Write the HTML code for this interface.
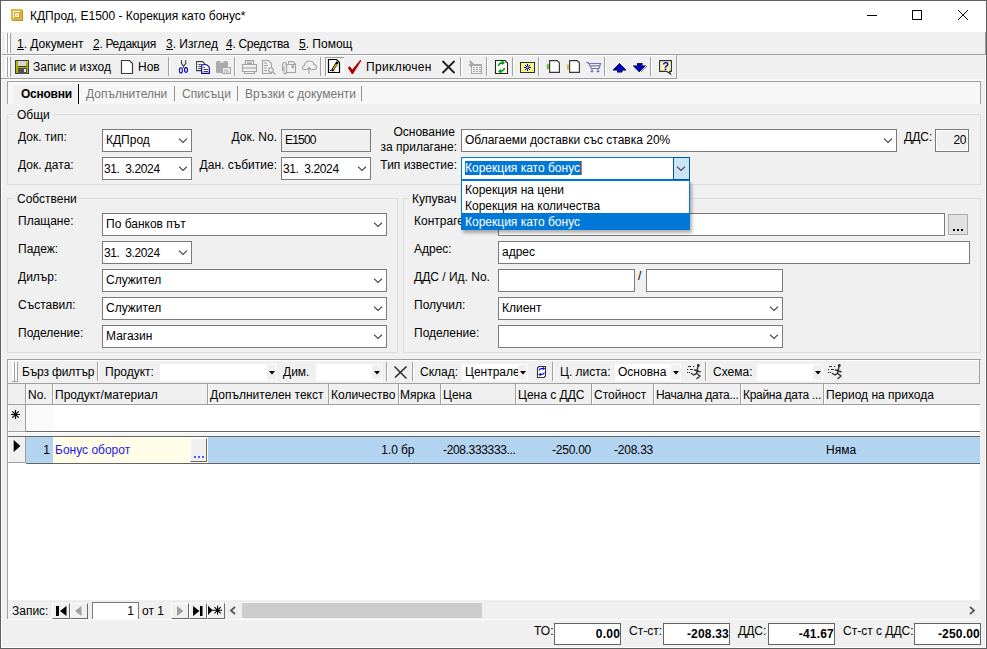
<!DOCTYPE html>
<html><head><meta charset="utf-8">
<style>
*{box-sizing:border-box}
html,body{margin:0;padding:0}
body{width:987px;height:649px;overflow:hidden;position:relative;background:#f0f0f0;font-family:"Liberation Sans",sans-serif;font-size:12px;color:#000}
.a{position:absolute}
.t{position:absolute;white-space:nowrap;line-height:14px}
.box{position:absolute;background:#fff;border:1px solid #7a7a7a}
.grp{position:absolute;border:1px solid #dcdcdc}
.chev{position:absolute;width:9px;height:5px}
.sep{position:absolute;width:1px;background:#a0a0a0;border-right:1px solid #fff}
u{text-decoration:none;position:relative}u::after{content:"";position:absolute;left:0;right:0;top:12px;height:1px;background:#000}
</style></head><body>
<!-- window border -->
<div class="a" style="left:0;top:0;width:987px;height:649px;border:1px solid #5f5f5f;z-index:50;pointer-events:none"></div>
<!-- title bar -->
<div class="a" style="left:1px;top:1px;width:985px;height:31px;background:#fff"></div>
<svg class="a" style="left:0;top:0" width="30" height="30" viewBox="0 0 30 30" shape-rendering="crispEdges"><rect x="11" y="9" width="11" height="11" fill="#e2b440"/><rect x="12" y="20" width="11" height="1" fill="#c09020"/><rect x="22" y="10" width="1" height="11" fill="#c09020"/><rect x="13" y="11" width="7" height="7" fill="#fff"/><rect x="14" y="12" width="6" height="6" fill="#d4a020"/><rect x="15" y="13" width="4" height="4" fill="#fff"/><rect x="16" y="14" width="2" height="2" fill="#ecd8a0"/></svg>
<div class="t" style="left:30px;top:9px">КДПрод, Е1500 - Корекция като бонус*</div>
<div class="a" style="left:867px;top:15px;width:10px;height:1px;background:#000"></div>
<div class="a" style="left:912px;top:10px;width:10px;height:10px;border:1px solid #000"></div>
<svg class="a" style="left:957px;top:9px" width="12" height="12" viewBox="0 0 12 12"><path d="M1 1L11 11M11 1L1 11" stroke="#000" stroke-width="0.95"/></svg>

<!-- menu bar -->
<div class="a" style="left:1px;top:54px;width:985px;height:1px;background:#a0a0a0"></div>
<div class="a" style="left:1px;top:32px;width:1px;height:616px;background:#fff"></div>
<div class="a" style="left:985px;top:32px;width:1px;height:23px;background:#a0a0a0"></div>
<div class="a" style="left:985px;top:55px;width:1px;height:593px;background:#fafafa"></div>
<div class="a" style="left:1px;top:647px;width:985px;height:1px;background:#fff;z-index:40"></div>
<div class="a" style="left:5px;top:52px;width:6px;height:1px;background:#a0a0a0"></div>
<div class="a" style="left:5px;top:76px;width:6px;height:1px;background:#a0a0a0"></div>
<div class="a" style="left:5px;top:33px;width:2px;height:20px;background:#fff"></div><div class="a" style="left:7px;top:33px;width:1px;height:20px;background:#a0a0a0"></div><div class="a" style="left:8px;top:33px;width:2px;height:20px;background:#fff"></div><div class="a" style="left:10px;top:33px;width:1px;height:20px;background:#a0a0a0"></div>
<div class="t" style="left:17px;top:37px"><u>1</u>. Документ</div>
<div class="t" style="left:93px;top:37px;letter-spacing:-0.3px"><u>2</u>. Редакция</div>
<div class="t" style="left:166px;top:37px"><u>3</u>. Изглед</div>
<div class="t" style="left:226px;top:37px;letter-spacing:-0.3px"><u>4</u>. Средства</div>
<div class="t" style="left:299px;top:37px"><u>5</u>. Помощ</div>

<!-- toolbar -->
<div class="a" style="left:1px;top:78px;width:676px;height:1px;background:#a0a0a0"></div>
<div class="a" style="left:676px;top:55px;width:1px;height:24px;background:#a0a0a0"></div>
<div class="a" style="left:5px;top:57px;width:2px;height:20px;background:#fff"></div><div class="a" style="left:7px;top:57px;width:1px;height:20px;background:#a0a0a0"></div><div class="a" style="left:8px;top:57px;width:2px;height:20px;background:#fff"></div><div class="a" style="left:10px;top:57px;width:1px;height:20px;background:#a0a0a0"></div>
<svg class="a" style="left:0;top:0" width="700" height="80" viewBox="0 0 700 80">
<g shape-rendering="crispEdges">
<rect x="1" y="55" width="675" height="1" fill="#fff"/>
<rect x="168" y="57" width="1" height="19" fill="#a0a0a0"/><rect x="169" y="57" width="1" height="19" fill="#fff"/>
<rect x="234" y="57" width="1" height="19" fill="#a0a0a0"/><rect x="235" y="57" width="1" height="19" fill="#fff"/>
<rect x="320" y="57" width="1" height="19" fill="#a0a0a0"/><rect x="321" y="57" width="1" height="19" fill="#fff"/>
<rect x="460" y="57" width="1" height="19" fill="#a0a0a0"/><rect x="461" y="57" width="1" height="19" fill="#fff"/>
<rect x="486" y="57" width="1" height="19" fill="#a0a0a0"/><rect x="487" y="57" width="1" height="19" fill="#fff"/>
<rect x="512" y="57" width="1" height="19" fill="#a0a0a0"/><rect x="513" y="57" width="1" height="19" fill="#fff"/>
<rect x="538" y="57" width="1" height="19" fill="#a0a0a0"/><rect x="539" y="57" width="1" height="19" fill="#fff"/>
<rect x="604" y="57" width="1" height="19" fill="#a0a0a0"/><rect x="605" y="57" width="1" height="19" fill="#fff"/>
<rect x="650" y="57" width="1" height="19" fill="#a0a0a0"/><rect x="651" y="57" width="1" height="19" fill="#fff"/>
<!-- floppy -->
<rect x="15" y="60" width="14" height="14" fill="#3c3c3c"/>
<rect x="16" y="61" width="12" height="12" fill="#b4b000"/>
<rect x="18" y="61" width="8" height="5" fill="#d6d6d6"/>
<rect x="18" y="66" width="9" height="1" fill="#3c3c3c"/>
<rect x="18" y="68" width="9" height="6" fill="#505050"/>
<rect x="24" y="69" width="2" height="3" fill="#e6e6e6"/>
<rect x="27" y="61" width="1" height="1" fill="#fff"/>
<!-- pressed button -->
<rect x="325" y="57" width="19" height="19" fill="#f8f8f8"/>
<rect x="325" y="57" width="19" height="1" fill="#a0a0a0"/>
<rect x="325" y="57" width="1" height="19" fill="#a0a0a0"/>
<!-- up/down arrows -->
<path d="M613 70 L619.5 63 L626 70 L622 70 L622 72 L617 72 L617 70 Z" fill="#0000b0" stroke="#202040" stroke-width="0.6"/>
<path d="M637 63 L642 63 L642 65.5 L646 65.5 L639.5 72 L633 65.5 L637 65.5 Z" fill="#0000b0" stroke="#202040" stroke-width="0.6"/>
<!-- toolbar border right -->
</g>
<!-- new doc -->
<path d="M121.5 60.5 H129.5 L132.5 63.5 V73.5 H121.5 Z" fill="#fff" stroke="#3c3c3c" stroke-width="1.2"/>
<!-- scissors -->
<path d="M181.5 60 V63.5 L183.5 66.3 L185.7 63.5 V60 M183.5 66 V68" stroke="#404040" stroke-width="1.1" fill="none"/>
<ellipse cx="180.9" cy="70.4" rx="1.5" ry="2.6" fill="none" stroke="#0000b8" stroke-width="1.05"/>
<ellipse cx="186" cy="69.9" rx="1.5" ry="2.3" fill="none" stroke="#0000b8" stroke-width="1.05"/>
<!-- copy -->
<path d="M196.6 61.6 H202.5 L204.5 63.6 V70.6 H196.6 Z" fill="#fff" stroke="#404040" stroke-width="1.1"/>
<path d="M198.3 64.5h2.5M198.3 66.6h3.5M198.3 68.6h3" stroke="#404040" stroke-width="1"/>
<path d="M201.7 64.7 H206.8 L209.3 67.2 V73.3 H201.7 Z" fill="#fff" stroke="#0000a8" stroke-width="1.15"/>
<path d="M203.5 67.5h1.5M203.5 69.5h4.5M203.5 71.5h4.5" stroke="#404040" stroke-width="1"/>
<!-- paste (disabled) -->
<rect x="216" y="61" width="12" height="12" rx="1.5" fill="#ababab"/>
<path d="M219 62.5 L222 60.5 L225 62.5 Z" fill="#f0f0f0"/>
<rect x="222" y="67" width="9" height="7" fill="#ababab"/><rect x="223" y="68" width="7" height="5" fill="#e8e8e8"/>
<path d="M224 70h4M224 72h5" stroke="#ababab" stroke-width="0.9"/>
<!-- printer -->
<g fill="none" stroke="#a3a3a3" stroke-width="1.1">
<path d="M245.5 64.5 V60.5 H253.5 V64.5"/>
<path d="M242.5 64.5 H256.5 V71.5 H242.5 Z"/>
<path d="M244.5 71.5 V73.5 H254.5 V71.5"/>
<path d="M247 62h5M247 63.5h5"/>
<path d="M242.5 68h14"/>
</g>
<!-- preview -->
<g fill="none" stroke="#a3a3a3" stroke-width="1.1">
<path d="M262.5 60.5 H268.5 L271.5 63.5 V73.5 H262.5 Z"/>
<path d="M264 63h3M264 65.5h4M264 68h3M264 70.5h3"/>
<circle cx="271" cy="70" r="2.3" fill="#f0f0f0"/>
<path d="M273 72 L275.5 74.5"/>
</g>
<!-- attach -->
<g fill="none" stroke="#a3a3a3" stroke-width="1.1">
<path d="M285.5 64.5 H295.5 V72.5 H285.5"/>
<path d="M288.5 64.5 V61.5 H293 L295.5 64"/>
<path d="M284 66 V72.5 Q284 74 285.3 74 Q286.6 74 286.6 72.5 V65 Q286.6 62.5 284.5 62.5 Q282.5 62.5 282.5 65 V71"/>
<rect x="292" y="66" width="1.5" height="1.5" fill="#a3a3a3"/>
</g>
<!-- cloud -->
<g fill="none" stroke="#a3a3a3" stroke-width="1.1">
<path d="M306 69.5 H304 Q302.5 69.5 302.5 67.5 Q302.5 65.5 304.5 65.5 Q305 61 309.5 61 Q313.5 61 314 64.5 Q316.5 64.5 316.5 67 Q316.5 69.5 314 69.5 H312"/>
<path d="M309 74 V68 M306.5 70 L309 67.5 L311.5 70"/>
</g>
<!-- edit doc -->
<path d="M328.5 59.5 H336.5 L339.5 62.5 V72.5 H328.5 Z" fill="#fff" stroke="#000" stroke-width="1.2"/>
<path d="M337.5 62 L332 71" stroke="#000" stroke-width="2.4"/>
<path d="M336.5 64 L333 69.5" stroke="#f0e000" stroke-width="1.2"/>
<rect x="330" y="70" width="1" height="1" fill="#000"/>
<!-- check -->
<path d="M347.8 67.8 L349.7 66.3 L352.3 69.6 L360.4 59.8 L361.3 60.7 L353 73.9 L351.8 73.9 Z" fill="#b00000"/>
<!-- X -->
<path d="M442.5 61 L454.5 73 M454.5 61 L442.5 73" stroke="#1e1e1e" stroke-width="1.8"/>
<!-- calendar disabled -->
<g shape-rendering="crispEdges">
<rect x="471" y="64" width="11" height="10" fill="#a8a8a8"/>
<rect x="472" y="66" width="9" height="7" fill="#f0f0f0"/>
<rect x="473" y="67" width="2" height="1" fill="#a8a8a8"/><rect x="476" y="67" width="2" height="1" fill="#a8a8a8"/><rect x="479" y="67" width="2" height="1" fill="#a8a8a8"/>
<rect x="473" y="69" width="2" height="1" fill="#a8a8a8"/><rect x="476" y="69" width="2" height="1" fill="#a8a8a8"/><rect x="479" y="69" width="2" height="1" fill="#a8a8a8"/>
<rect x="473" y="71" width="2" height="1" fill="#a8a8a8"/><rect x="476" y="71" width="2" height="1" fill="#a8a8a8"/><rect x="479" y="71" width="2" height="1" fill="#a8a8a8"/>
</g>
<path d="M469 61 L470.5 64 L468.5 64.5 L471 67.5 L472.5 64.5 L474 63 L472.5 62.5 L471 60.5 Z" fill="#a8a8a8"/>
<!-- refresh doc -->
<path d="M495.5 60.5 H505 L507.5 63 V73.5 H495.5 Z" fill="#fff" stroke="#222" stroke-width="1.1"/>
<path d="M498.5 66 Q499 62.8 502 62.8 L503.5 62.8 M501.8 61.2 L503.8 62.8 L501.8 64.4" fill="none" stroke="#00a000" stroke-width="1.5"/>
<path d="M504.5 68 Q504 71.2 501 71.2 L499.5 71.2 M501.2 69.6 L499.2 71.2 L501.2 72.8" fill="none" stroke="#00a000" stroke-width="1.5"/>
<!-- yellow box -->
<rect x="520.5" y="62.5" width="14" height="10" fill="#f8f880" stroke="#333" stroke-width="1"/>
<path d="M527.5 64 V71 M524 67.5 H531 M525 65 L530 70 M530 65 L525 70" stroke="#0000a0" stroke-width="1"/>
<circle cx="527.5" cy="67.5" r="1.3" fill="#fff" stroke="#0000a0" stroke-width="0.8"/>
<!-- doc green -->
<ellipse cx="548" cy="66.5" rx="1.4" ry="2.8" fill="#70c040"/>
<path d="M549.6 60.6 H557.2 L559.4 62.8 V72.4 H549.6 Z" fill="#fff" stroke="#383838" stroke-width="1.15"/>
<!-- doc yellow -->
<ellipse cx="568" cy="67" rx="1.4" ry="3" fill="#e0b860"/>
<path d="M569.6 60.6 H577.2 L579.4 62.8 V72.4 H569.6 Z" fill="#fff" stroke="#383838" stroke-width="1.15"/>
<!-- cart -->
<g fill="none" stroke="#7474b4" stroke-width="1.2">
<path d="M586.3 62.3 L588.5 62.8 L591.5 68.5 H599 L600.5 63.5 H589"/>
<path d="M590.3 65.8 H599.5"/>
<path d="M592 68.5 V72.5 M598 68.5 V72.5 M590.5 71.5 H593.5 M596.5 71.5 H599.5"/>
</g>
<!-- help -->
<path d="M659.6 60.6 H671.4 V71.4 H669.5 L670.5 74 L666.5 71.4 H659.6 Z" fill="#fbf7c0" stroke="#303030" stroke-width="1.1"/>
<text x="665.5" y="70" font-family="Liberation Sans" font-weight="bold" font-size="11" fill="#0000a0" text-anchor="middle">?</text>
</svg>
<div class="t" style="left:33px;top:60px">Запис и изход</div>
<div class="t" style="left:138px;top:60px">Нов</div>
<div class="t" style="left:366px;top:60px;letter-spacing:0.35px">Приключен</div>

<!-- tab strip -->
<div class="a" style="left:1px;top:79px;width:985px;height:2px;background:#fafafa"></div>
<div class="a" style="left:7px;top:81px;width:974px;height:23px;border:1px solid #a0a0a0;border-bottom:none;background:#f7f7f7"></div>
<div class="a" style="left:14px;top:85px;width:64px;height:19px;background:#f0f0f0"></div>
<div class="a" style="left:78px;top:84px;width:1px;height:20px;background:#000"></div>
<div class="t" style="left:21px;top:87px;font-weight:bold;letter-spacing:-0.25px">Основни</div>
<div class="t" style="left:86px;top:87px;color:#767676">Допълнителни</div>
<div class="a" style="left:174px;top:86px;width:1px;height:15px;background:#909090"></div>
<div class="t" style="left:182px;top:87px;color:#767676">Списъци</div>
<div class="a" style="left:237px;top:86px;width:1px;height:15px;background:#909090"></div>
<div class="t" style="left:245px;top:87px;color:#767676">Връзки с документи</div>
<div class="a" style="left:361px;top:86px;width:1px;height:15px;background:#909090"></div>

<!--FORMS-->
<div class="grp" style="left:7px;top:114px;width:974px;height:71px"></div>
<div class="a" style="left:14px;top:113px;width:39px;height:3px;background:#f0f0f0"></div>
<div class="t" style="left:17px;top:108px;">Общи</div>
<div class="t" style="left:18px;top:130px;">Док. тип:</div>
<div class="t" style="left:18px;top:158px;">Док. дата:</div>
<div class="a" style="left:102px;top:129px;width:90px;height:23px;background:#fff;border:1px solid #7a7a7a;"></div>
<svg class="a" style="left:178px;top:138px" width="10" height="6" viewBox="0 0 10 6"><path d="M1 0.7 L5 4.5 L9 0.7" fill="none" stroke="#404040" stroke-width="1.1"/></svg>
<div class="t" style="left:106px;top:133px;">КДПрод</div>
<div class="a" style="left:102px;top:157px;width:90px;height:23px;background:#fff;border:1px solid #7a7a7a;"></div>
<svg class="a" style="left:178px;top:166px" width="10" height="6" viewBox="0 0 10 6"><path d="M1 0.7 L5 4.5 L9 0.7" fill="none" stroke="#404040" stroke-width="1.1"/></svg>
<div class="t" style="left:104px;top:162px;letter-spacing:-0.4px">31.&nbsp; 3.2024</div>
<div class="t" style="right:710px;top:130px;text-align:right;">Док. No.</div>
<div class="a" style="left:281px;top:129px;width:90px;height:23px;background:#f0f0f0;border:1px solid #7a7a7a;"></div>
<div class="t" style="left:285px;top:133px;letter-spacing:-0.8px">E1500</div>
<div class="t" style="right:710px;top:158px;text-align:right;">Дан. събитие:</div>
<div class="a" style="left:281px;top:157px;width:90px;height:23px;background:#fff;border:1px solid #7a7a7a;"></div>
<svg class="a" style="left:357px;top:166px" width="10" height="6" viewBox="0 0 10 6"><path d="M1 0.7 L5 4.5 L9 0.7" fill="none" stroke="#404040" stroke-width="1.1"/></svg>
<div class="t" style="left:283px;top:162px;letter-spacing:-0.4px">31.&nbsp; 3.2024</div>
<div class="t" style="right:532px;top:125px;text-align:right;">Основание</div>
<div class="t" style="right:530px;top:140px;text-align:right;">за прилагане:</div>
<div class="t" style="right:530px;top:158px;text-align:right;">Тип известие:</div>
<div class="a" style="left:461px;top:129px;width:436px;height:23px;background:#fff;border:1px solid #7a7a7a;"></div>
<svg class="a" style="left:883px;top:138px" width="10" height="6" viewBox="0 0 10 6"><path d="M1 0.7 L5 4.5 L9 0.7" fill="none" stroke="#404040" stroke-width="1.1"/></svg>
<div class="t" style="left:465px;top:133px;">Облагаеми доставки със ставка 20%</div>
<div class="t" style="left:904px;top:130px;">ДДС:</div>
<div class="a" style="left:935px;top:129px;width:34px;height:23px;background:#f0f0f0;border:1px solid #7a7a7a;box-shadow:inset 1px 1px 0 #fff, inset -1px -1px 0 #fff;"></div>
<div class="t" style="right:21px;top:133px;text-align:right;letter-spacing:-0.4px">20</div>
<div class="grp" style="left:7px;top:198px;width:391px;height:155px"></div>
<div class="a" style="left:14px;top:197px;width:64px;height:3px;background:#f0f0f0"></div>
<div class="t" style="left:17px;top:192px;">Собствени</div>
<div class="t" style="left:18px;top:214px;">Плащане:</div>
<div class="t" style="left:18px;top:242px;">Падеж:</div>
<div class="t" style="left:18px;top:270px;">Дилър:</div>
<div class="t" style="left:18px;top:298px;">Съставил:</div>
<div class="t" style="left:18px;top:326px;">Поделение:</div>
<div class="a" style="left:102px;top:213px;width:285px;height:23px;background:#fff;border:1px solid #7a7a7a;"></div>
<svg class="a" style="left:373px;top:222px" width="10" height="6" viewBox="0 0 10 6"><path d="M1 0.7 L5 4.5 L9 0.7" fill="none" stroke="#404040" stroke-width="1.1"/></svg>
<div class="t" style="left:106px;top:217px;">По банков път</div>
<div class="a" style="left:102px;top:241px;width:90px;height:23px;background:#fff;border:1px solid #7a7a7a;"></div>
<svg class="a" style="left:178px;top:250px" width="10" height="6" viewBox="0 0 10 6"><path d="M1 0.7 L5 4.5 L9 0.7" fill="none" stroke="#404040" stroke-width="1.1"/></svg>
<div class="t" style="left:104px;top:246px;letter-spacing:-0.4px">31.&nbsp; 3.2024</div>
<div class="a" style="left:102px;top:269px;width:285px;height:23px;background:#fff;border:1px solid #7a7a7a;"></div>
<svg class="a" style="left:373px;top:278px" width="10" height="6" viewBox="0 0 10 6"><path d="M1 0.7 L5 4.5 L9 0.7" fill="none" stroke="#404040" stroke-width="1.1"/></svg>
<div class="t" style="left:106px;top:273px;">Служител</div>
<div class="a" style="left:102px;top:297px;width:285px;height:23px;background:#fff;border:1px solid #7a7a7a;"></div>
<svg class="a" style="left:373px;top:306px" width="10" height="6" viewBox="0 0 10 6"><path d="M1 0.7 L5 4.5 L9 0.7" fill="none" stroke="#404040" stroke-width="1.1"/></svg>
<div class="t" style="left:106px;top:301px;">Служител</div>
<div class="a" style="left:102px;top:325px;width:285px;height:23px;background:#fff;border:1px solid #7a7a7a;"></div>
<svg class="a" style="left:373px;top:334px" width="10" height="6" viewBox="0 0 10 6"><path d="M1 0.7 L5 4.5 L9 0.7" fill="none" stroke="#404040" stroke-width="1.1"/></svg>
<div class="t" style="left:106px;top:329px;">Магазин</div>
<div class="grp" style="left:403px;top:198px;width:578px;height:155px"></div>
<div class="a" style="left:409px;top:197px;width:51px;height:3px;background:#f0f0f0"></div>
<div class="t" style="left:412px;top:192px;">Купувач</div>
<div class="t" style="left:414px;top:214px;">Контрагент:</div>
<div class="t" style="left:414px;top:242px;">Адрес:</div>
<div class="t" style="left:414px;top:270px;">ДДС / Ид. No.</div>
<div class="t" style="left:414px;top:298px;">Получил:</div>
<div class="t" style="left:414px;top:326px;">Поделение:</div>
<div class="a" style="left:498px;top:213px;width:447px;height:23px;background:#fff;border:1px solid #7a7a7a;"></div>
<div class="a" style="left:948px;top:214px;width:20px;height:21px;background:#e1e1e1;border:1px solid #adadad;"></div>
<div class="a" style="left:953px;top:229px;width:2px;height:2px;background:#000;box-shadow:4px 0 0 #000,8px 0 0 #000"></div>
<div class="a" style="left:498px;top:241px;width:472px;height:23px;background:#fff;border:1px solid #7a7a7a;"></div>
<div class="t" style="left:502px;top:245px;">адрес</div>
<div class="a" style="left:498px;top:269px;width:137px;height:23px;background:#fff;border:1px solid #7a7a7a;"></div>
<div class="t" style="left:638px;top:269px;">/</div>
<div class="a" style="left:646px;top:269px;width:137px;height:23px;background:#fff;border:1px solid #7a7a7a;"></div>
<div class="a" style="left:498px;top:297px;width:285px;height:23px;background:#fff;border:1px solid #7a7a7a;"></div>
<svg class="a" style="left:769px;top:306px" width="10" height="6" viewBox="0 0 10 6"><path d="M1 0.7 L5 4.5 L9 0.7" fill="none" stroke="#404040" stroke-width="1.1"/></svg>
<div class="t" style="left:502px;top:301px;">Клиент</div>
<div class="a" style="left:498px;top:325px;width:285px;height:23px;background:#fff;border:1px solid #7a7a7a;"></div>
<svg class="a" style="left:769px;top:334px" width="10" height="6" viewBox="0 0 10 6"><path d="M1 0.7 L5 4.5 L9 0.7" fill="none" stroke="#404040" stroke-width="1.1"/></svg>
<div class="a" style="left:461px;top:157px;width:229px;height:23px;background:#fff;border:1px solid #0078d7"></div>
<div class="a" style="left:673px;top:157px;width:17px;height:23px;background:#cce4f7;border:1px solid #005499"></div>
<svg class="a" style="left:676px;top:166px" width="10" height="6" viewBox="0 0 10 6"><path d="M1 0.7 L5 4.5 L9 0.7" fill="none" stroke="#404040" stroke-width="1.1"/></svg>
<div class="a" style="left:465px;top:161px;width:116px;height:14px;background:#0078d7"></div>
<div class="a" style="left:581px;top:161px;width:1px;height:14px;background:#e07020"></div>
<div class="t" style="left:465px;top:161px;color:#fff">Корекция като бонус</div>
<div class="a" style="left:461px;top:180px;width:229px;height:50px;background:#fff;border:1px solid #0078d7;box-shadow:2px 3px 3px rgba(0,0,0,0.3)"></div>
<div class="a" style="left:461px;top:213px;width:229px;height:17px;background:#0078d7"></div>
<div class="t" style="left:465px;top:183px;">Корекция на цени</div>
<div class="t" style="left:465px;top:199px;">Корекция на количества</div>
<div class="t" style="left:465px;top:215px;color:#fff">Корекция като бонус</div>
<!--/FORMS-->
<!--GRID-->
<div class="a" style="left:7px;top:359px;width:974px;height:1px;background:#a0a0a0;"></div>
<div class="a" style="left:7px;top:359px;width:1px;height:260px;background:#a0a0a0;"></div>
<div class="a" style="left:8px;top:360px;width:972px;height:240px;background:#fff;"></div>
<div class="a" style="left:8px;top:360px;width:972px;height:23px;background:#f0f0f0;"></div>
<div class="a" style="left:8px;top:360px;width:971px;height:1px;background:#fff;"></div>
<div class="a" style="left:8px;top:360px;width:1px;height:23px;background:#fff;"></div>
<div class="a" style="left:8px;top:383px;width:972px;height:1px;background:#a0a0a0;"></div>
<div class="a" style="left:979px;top:359px;width:1px;height:25px;background:#a0a0a0;"></div>
<div class="a" style="left:12px;top:362px;width:2px;height:20px;background:#fff;"></div>
<div class="a" style="left:14px;top:362px;width:1px;height:20px;background:#a0a0a0;"></div>
<div class="a" style="left:15px;top:362px;width:2px;height:20px;background:#fff;"></div>
<div class="a" style="left:17px;top:362px;width:1px;height:20px;background:#a0a0a0;"></div>
<div class="a" style="left:12px;top:381px;width:6px;height:1px;background:#a0a0a0;"></div>
<div class="t" style="left:22px;top:365px;letter-spacing:-0.15px">Бърз филтър</div>
<div class="a" style="left:97px;top:362px;width:1px;height:19px;background:#a0a0a0;"></div>
<div class="a" style="left:98px;top:362px;width:1px;height:19px;background:#fff;"></div>
<div class="t" style="left:105px;top:365px;">Продукт:</div>
<div class="a" style="left:160px;top:364px;width:117px;height:17px;background:#fff;"></div>
<div class="a" style="left:267px;top:365px;width:9px;height:15px;background:#f0f0f0;"></div>
<svg class="a" style="left:269px;top:371px" width="6" height="4" viewBox="0 0 6 4"><path d="M0 0H6L3 3.5Z" fill="#000"/></svg>
<div class="t" style="left:283px;top:365px;">Дим.</div>
<div class="a" style="left:316px;top:364px;width:66px;height:17px;background:#fff;"></div>
<div class="a" style="left:372px;top:365px;width:9px;height:15px;background:#f0f0f0;"></div>
<svg class="a" style="left:374px;top:371px" width="6" height="4" viewBox="0 0 6 4"><path d="M0 0H6L3 3.5Z" fill="#000"/></svg>
<div class="a" style="left:386px;top:362px;width:1px;height:19px;background:#a0a0a0;"></div>
<div class="a" style="left:387px;top:362px;width:1px;height:19px;background:#fff;"></div>
<svg class="a" style="left:393px;top:365px" width="15" height="15" viewBox="0 0 15 15"><path d="M1.5 1.5 L13.5 13.5" stroke="#303030" stroke-width="1.5"/><path d="M13.5 1.5 L2 12.5" stroke="#303030" stroke-width="1.7"/></svg>
<div class="a" style="left:412px;top:362px;width:1px;height:19px;background:#a0a0a0;"></div>
<div class="a" style="left:413px;top:362px;width:1px;height:19px;background:#fff;"></div>
<div class="t" style="left:420px;top:365px;">Склад:</div>
<div class="a" style="left:462px;top:364px;width:66px;height:17px;background:#fff;"></div>
<div class="a" style="left:518px;top:365px;width:9px;height:15px;background:#f0f0f0;"></div>
<svg class="a" style="left:520px;top:371px" width="6" height="4" viewBox="0 0 6 4"><path d="M0 0H6L3 3.5Z" fill="#000"/></svg>
<div class="t" style="left:465px;top:365px;width:53px;overflow:hidden">Централен</div>
<svg class="a" style="left:536px;top:365px" width="12" height="14" viewBox="0 0 12 14"><path d="M3 1.5H9.5V11L8 12.5H1.5V3Z" fill="#fff" stroke="#333" stroke-width="1.1"/><path d="M3.2 5.5Q3.5 3.6 5.5 3.6H8M6.8 2.6L8.2 3.6L6.8 4.6M8.3 7.5Q8 9.4 6 9.4H3.5M4.7 8.4L3.3 9.4L4.7 10.4" fill="none" stroke="#0000f0" stroke-width="1.2"/></svg>
<div class="a" style="left:552px;top:362px;width:1px;height:19px;background:#a0a0a0;"></div>
<div class="a" style="left:553px;top:362px;width:1px;height:19px;background:#fff;"></div>
<div class="t" style="left:560px;top:365px;">Ц. листа:</div>
<div class="a" style="left:615px;top:364px;width:66px;height:17px;background:#fff;"></div>
<div class="a" style="left:671px;top:365px;width:9px;height:15px;background:#f0f0f0;"></div>
<svg class="a" style="left:673px;top:371px" width="6" height="4" viewBox="0 0 6 4"><path d="M0 0H6L3 3.5Z" fill="#000"/></svg>
<div class="t" style="left:618px;top:365px;width:53px;overflow:hidden">Основна</div>
<svg class="a" style="left:687px;top:360px" width="16" height="22" viewBox="0 0 16 22"><g fill="none" stroke="#333" stroke-width="1.1"><path d="M1 6.5h3M6 6.5h1.2M0 9.5h1.2M3 9.5h3M0 12.5h1.2M2 12.5h1.2"/></g><g fill="none" stroke="#303030" stroke-width="1.4" stroke-linecap="round"><path d="M11 6.3L9.7 13M7.5 10L9.5 10.5M10 11L13 11.8M4.5 13.5L7 15L9.7 13.2M9.7 13.5L13 16L10 18.5"/></g><circle cx="11.3" cy="5.5" r="1.4" fill="#303030"/></svg>
<div class="a" style="left:705px;top:362px;width:1px;height:19px;background:#a0a0a0;"></div>
<div class="a" style="left:706px;top:362px;width:1px;height:19px;background:#fff;"></div>
<div class="t" style="left:713px;top:365px;">Схема:</div>
<div class="a" style="left:757px;top:364px;width:66px;height:17px;background:#fff;"></div>
<div class="a" style="left:813px;top:365px;width:9px;height:15px;background:#f0f0f0;"></div>
<svg class="a" style="left:815px;top:371px" width="6" height="4" viewBox="0 0 6 4"><path d="M0 0H6L3 3.5Z" fill="#000"/></svg>
<svg class="a" style="left:828px;top:360px" width="16" height="22" viewBox="0 0 16 22"><g fill="none" stroke="#333" stroke-width="1.1"><path d="M1 6.5h3M6 6.5h1.2M0 9.5h1.2M3 9.5h3M0 12.5h1.2M2 12.5h1.2"/></g><g fill="none" stroke="#303030" stroke-width="1.4" stroke-linecap="round"><path d="M11 6.3L9.7 13M7.5 10L9.5 10.5M10 11L13 11.8M4.5 13.5L7 15L9.7 13.2M9.7 13.5L13 16L10 18.5"/></g><circle cx="11.3" cy="5.5" r="1.4" fill="#303030"/></svg>
<div class="a" style="left:8px;top:384px;width:972px;height:21px;background:#f0f0f0;"></div>
<div class="a" style="left:8px;top:404px;width:972px;height:1px;background:#a0a0a0;"></div>
<div class="a" style="left:25px;top:384px;width:1px;height:21px;background:#a0a0a0;"></div>
<div class="a" style="left:26px;top:384px;width:1px;height:20px;background:#fff;"></div>
<div class="a" style="left:52px;top:384px;width:1px;height:21px;background:#a0a0a0;"></div>
<div class="a" style="left:53px;top:384px;width:1px;height:20px;background:#fff;"></div>
<div class="a" style="left:207px;top:384px;width:1px;height:21px;background:#a0a0a0;"></div>
<div class="a" style="left:208px;top:384px;width:1px;height:20px;background:#fff;"></div>
<div class="a" style="left:328px;top:384px;width:1px;height:21px;background:#a0a0a0;"></div>
<div class="a" style="left:329px;top:384px;width:1px;height:20px;background:#fff;"></div>
<div class="a" style="left:398px;top:384px;width:1px;height:21px;background:#a0a0a0;"></div>
<div class="a" style="left:399px;top:384px;width:1px;height:20px;background:#fff;"></div>
<div class="a" style="left:440px;top:384px;width:1px;height:21px;background:#a0a0a0;"></div>
<div class="a" style="left:441px;top:384px;width:1px;height:20px;background:#fff;"></div>
<div class="a" style="left:515px;top:384px;width:1px;height:21px;background:#a0a0a0;"></div>
<div class="a" style="left:516px;top:384px;width:1px;height:20px;background:#fff;"></div>
<div class="a" style="left:591px;top:384px;width:1px;height:21px;background:#a0a0a0;"></div>
<div class="a" style="left:592px;top:384px;width:1px;height:20px;background:#fff;"></div>
<div class="a" style="left:653px;top:384px;width:1px;height:21px;background:#a0a0a0;"></div>
<div class="a" style="left:654px;top:384px;width:1px;height:20px;background:#fff;"></div>
<div class="a" style="left:740px;top:384px;width:1px;height:21px;background:#a0a0a0;"></div>
<div class="a" style="left:741px;top:384px;width:1px;height:20px;background:#fff;"></div>
<div class="a" style="left:823px;top:384px;width:1px;height:21px;background:#a0a0a0;"></div>
<div class="a" style="left:824px;top:384px;width:1px;height:20px;background:#fff;"></div>
<div class="t" style="left:28px;top:388px;">No.</div>
<div class="t" style="left:55px;top:388px;">Продукт/материал</div>
<div class="t" style="left:210px;top:388px;">Допълнителен текст</div>
<div class="t" style="left:331px;top:388px;">Количество</div>
<div class="t" style="left:400px;top:388px;">Мярка</div>
<div class="t" style="left:443px;top:388px;">Цена</div>
<div class="t" style="left:518px;top:388px;">Цена с ДДС</div>
<div class="t" style="left:594px;top:388px;">Стойност</div>
<div class="t" style="left:656px;top:388px;"><span style="letter-spacing:-0.3px">Начална дата...</span></div>
<div class="t" style="left:743px;top:388px;"><span style="letter-spacing:-0.3px">Крайна дата ...</span></div>
<div class="t" style="left:826px;top:388px;">Период на прихода</div>
<div class="a" style="left:8px;top:405px;width:17px;height:26px;background:#f0f0f0;"></div>
<div class="a" style="left:8px;top:405px;width:1px;height:26px;background:#fff;"></div>
<div class="a" style="left:25px;top:405px;width:1px;height:26px;background:#a0a0a0;"></div>
<div class="a" style="left:26px;top:405px;width:27px;height:26px;background:#fafafa;"></div>
<svg class="a" style="left:11px;top:410px" width="9" height="9" viewBox="0 0 9 9"><path d="M4.5 0V9M0 4.5H9M1.3 1.3L7.7 7.7M7.7 1.3L1.3 7.7" stroke="#000" stroke-width="1.2"/><circle cx="4.5" cy="4.5" r="1.5" fill="#000"/></svg>
<div class="a" style="left:8px;top:431px;width:18px;height:1px;background:#a0a0a0;"></div>
<div class="a" style="left:26px;top:431px;width:954px;height:1px;background:#696969;"></div>
<div class="a" style="left:8px;top:432px;width:972px;height:4px;background:#f4f4f4;"></div>
<div class="a" style="left:8px;top:432px;width:972px;height:1px;background:#fff;"></div>
<div class="a" style="left:8px;top:436px;width:972px;height:1px;background:#646464;"></div>
<div class="a" style="left:8px;top:437px;width:17px;height:26px;background:#f0f0f0;"></div>
<div class="a" style="left:8px;top:437px;width:1px;height:26px;background:#fff;"></div>
<div class="a" style="left:25px;top:437px;width:1px;height:26px;background:#a0a0a0;"></div>
<div class="a" style="left:8px;top:462px;width:18px;height:1px;background:#a0a0a0;"></div>
<div class="a" style="left:26px;top:437px;width:954px;height:26px;background:#b3d4f1;"></div>
<div class="a" style="left:26px;top:463px;width:954px;height:1px;background:#646464;"></div>
<div class="a" style="left:53px;top:437px;width:155px;height:26px;background:#fffde8;"></div>
<svg class="a" style="left:13px;top:440px" width="8" height="12" viewBox="0 0 8 12"><path d="M0.7 0L7.4 6L0.7 12Z" fill="#000"/></svg>
<div class="t" style="right:937px;top:443px;text-align:right;">1</div>
<div class="t" style="left:55px;top:443px;color:#1a1ae6">Бонус оборот</div>
<div class="a" style="left:190px;top:438px;width:17px;height:24px;background:#f0f0f0;border-top:1px solid #fff;border-left:1px solid #fff;border-right:1px solid #696969;border-bottom:1px solid #696969;box-sizing:border-box"></div>
<div class="a" style="left:194px;top:456px;width:2px;height:2px;background:#2828f0;border-radius:1px;box-shadow:4px 0 0 #2828f0,8px 0 0 #2828f0"></div>
<div class="t" style="right:589px;top:443px;text-align:right;">1.0</div>
<div class="t" style="left:401px;top:443px;">бр</div>
<div class="t" style="left:443px;top:443px;letter-spacing:-0.35px">-208.333333...</div>
<div class="t" style="right:396px;top:443px;text-align:right;letter-spacing:-0.25px">-250.00</div>
<div class="t" style="right:334px;top:443px;text-align:right;letter-spacing:-0.25px">-208.33</div>
<div class="t" style="left:826px;top:443px;">Няма</div>
<div class="a" style="left:8px;top:601px;width:972px;height:1px;background:#ececec;"></div>
<div class="a" style="left:8px;top:602px;width:972px;height:17px;background:#f0f0f0;"></div>
<div class="a" style="left:7px;top:619px;width:974px;height:1px;background:#fff;"></div>
<div class="t" style="left:12px;top:604px;">Запис:</div>
<div class="a" style="left:52px;top:603px;width:18px;height:16px;background:#f0f0f0;border-top:1px solid #fff;border-left:1px solid #fff;border-right:1px solid #696969;border-bottom:1px solid #696969"></div>
<svg class="a" style="left:56px;top:606px" width="11" height="10" viewBox="0 0 11 10"><rect x="0" y="0" width="3" height="10" fill="#000"/><path d="M10.5 0L4 5L10.5 10Z" fill="#000"/></svg>
<div class="a" style="left:70px;top:603px;width:18px;height:16px;background:#f0f0f0;border-top:1px solid #fff;border-left:1px solid #fff;border-right:1px solid #696969;border-bottom:1px solid #696969"></div>
<svg class="a" style="left:75px;top:606px" width="7" height="10" viewBox="0 0 7 10"><path d="M6.5 0L0 5L6.5 10Z" fill="#a0a0a0"/></svg>
<div class="a" style="left:92px;top:602px;width:47px;height:17px;background:#fff;border:1px solid #7a7a7a;border-bottom:none"></div>
<div class="t" style="right:853px;top:604px;text-align:right;">1</div>
<div class="t" style="left:142px;top:604px;">от 1</div>
<div class="a" style="left:171px;top:603px;width:18px;height:16px;background:#f0f0f0;border-top:1px solid #fff;border-left:1px solid #fff;border-right:1px solid #696969;border-bottom:1px solid #696969"></div>
<svg class="a" style="left:177px;top:606px" width="7" height="10" viewBox="0 0 7 10"><path d="M0 0L6.5 5L0 10Z" fill="#a0a0a0"/></svg>
<div class="a" style="left:189px;top:603px;width:18px;height:16px;background:#f0f0f0;border-top:1px solid #fff;border-left:1px solid #fff;border-right:1px solid #696969;border-bottom:1px solid #696969"></div>
<svg class="a" style="left:193px;top:606px" width="11" height="10" viewBox="0 0 11 10"><path d="M0 0L6.5 5L0 10Z" fill="#000"/><rect x="7" y="0" width="2.5" height="10" fill="#000"/></svg>
<div class="a" style="left:207px;top:603px;width:18px;height:16px;background:#f0f0f0;border-top:1px solid #fff;border-left:1px solid #fff;border-right:1px solid #696969;border-bottom:1px solid #696969"></div>
<svg class="a" style="left:208px;top:605px" width="16" height="12" viewBox="0 0 16 12"><path d="M0 0.8L4.6 5.3L0 9.9Z" fill="#000"/><path d="M4 5.3H14M9.6 0.8V9.8M6.5 2.2L12.7 8.4M12.7 2.2L6.5 8.4" stroke="#000" stroke-width="1.05"/><circle cx="9.6" cy="5.3" r="1.5" fill="#000"/></svg>
<svg class="a" style="left:229px;top:606px" width="8" height="9" viewBox="0 0 8 9"><path d="M6 0.8L2 4.5L6 8.2" fill="none" stroke="#555" stroke-width="1.8"/></svg>
<div class="a" style="left:242px;top:603px;width:240px;height:15px;background:#cdcdcd;"></div>
<svg class="a" style="left:968px;top:606px" width="8" height="9" viewBox="0 0 8 9"><path d="M2 0.8L6 4.5L2 8.2" fill="none" stroke="#555" stroke-width="1.8"/></svg>
<div class="t" style="left:534px;top:624px;">ТО:</div>
<div class="a" style="left:554px;top:623px;width:67px;height:22px;background:#fff;border:1px solid #646464"></div>
<div class="t" style="right:367px;top:627px;text-align:right;font-weight:bold;letter-spacing:0.2px">0.00</div>
<div class="t" style="left:629px;top:624px;">Ст-ст:</div>
<div class="a" style="left:663px;top:623px;width:67px;height:22px;background:#fff;border:1px solid #646464"></div>
<div class="t" style="right:258px;top:627px;text-align:right;font-weight:bold;letter-spacing:0.2px">-208.33</div>
<div class="t" style="left:738px;top:624px;">ДДС:</div>
<div class="a" style="left:768px;top:623px;width:67px;height:22px;background:#fff;border:1px solid #646464"></div>
<div class="t" style="right:153px;top:627px;text-align:right;font-weight:bold;letter-spacing:0.2px">-41.67</div>
<div class="t" style="left:843px;top:624px;">Ст-ст с ДДС:</div>
<div class="a" style="left:914px;top:623px;width:67px;height:22px;background:#fff;border:1px solid #646464"></div>
<div class="t" style="right:7px;top:627px;text-align:right;font-weight:bold;letter-spacing:0.2px">-250.00</div>
<!--/GRID-->

</body></html>
